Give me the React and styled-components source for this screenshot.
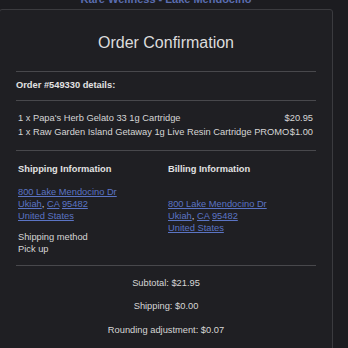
import React from 'react';
import styled, { createGlobalStyle } from 'styled-components';

const GlobalStyle = createGlobalStyle`
  body {
    margin: 0;
    background-color: #1c1c20;
    font-family: "Liberation Sans", Arial, sans-serif;
  }
`

const Page = styled.div`
  width: 348px;
  height: 348px;
  overflow: hidden;
  background-color: #1c1c20;
`
const StoreName = styled.div`
  margin-top: -7px;
  height: 12px;
  line-height: 12px;
  font-size: 11px;
  font-weight: bold;
  text-align: center;
  color: #5a6db0;
  padding-right: 16px;
`
const Card = styled.div`
  margin: 4px 0 0 -1px;
  width: 334px;
  box-sizing: border-box;
  min-height: 400px;
  padding: 0 16px;
  background-color: #1f1f23;
  border: 1px solid #3b3b3f;
  border-radius: 3px;
`
const Title = styled.h1`
  margin: 0;
  padding: 23px 0 18px;
  line-height: 20px;
  font-size: 16px;
  font-weight: normal;
  text-align: center;
  color: #dcdcdc;
`
const Divider = styled.div`
  height: 1px;
  background-color: #48484c;
  margin-top: ${p => p.gap || 0}px;
`
const Heading = styled.div`
  margin-top: ${p => p.gap || 0}px;
  line-height: 14px;
  font-size: 9.3px;
  font-weight: bold;
  color: #e2e2e2;
`
const ItemList = styled.div`
  margin-top: 10px;
  padding: 0 3px 0 2px;
`
const Item = styled.div`
  display: flex;
  justify-content: space-between;
  line-height: 14px;
  font-size: 9.3px;
  color: #d6d6d6;
`
const Columns = styled.div`
  display: grid;
  grid-template-columns: 1fr 1fr;
`
const Column = styled.div`
  padding-left: 2px;
`
const Address = styled.div`
  margin-top: 10px;
  line-height: 12px;
  font-size: 9.3px;
  color: #d6d6d6;
`
const Blank = styled.div`
  height: 12px;
`
const Link = styled.a`
  color: #5b74c4;
  text-decoration: underline;
`
const Method = styled.div`
  margin-top: 9px;
  line-height: 12px;
  font-size: 9.3px;
  color: #d6d6d6;
`
const Totals = styled.div`
  display: flex;
  flex-direction: column;
  gap: 9.3px;
  margin-top: 10px;
`
const TotalRow = styled.div`
  line-height: 14px;
  font-size: 9.3px;
  text-align: center;
  color: #d6d6d6;
`

const items = [
  { name: "1 x Papa's Herb Gelato 33 1g Cartridge", price: '$20.95' },
  { name: '1 x Raw Garden Island Getaway 1g Live Resin Cartridge PROMO', price: '$1.00' },
]

const AddressLines = () => (
  <>
    <div><Link>800 Lake Mendocino Dr</Link></div>
    <div><Link>Ukiah</Link>, <Link>CA</Link> <Link>95482</Link></div>
    <div><Link>United States</Link></div>
  </>
)

export default function App() {
  return (
    <Page>
      <GlobalStyle />
      <StoreName>Rare Wellness - Lake Mendocino</StoreName>
      <Card>
        <Title>Order Confirmation</Title>
        <Divider />
        <Heading gap={6}>Order #549330 details:</Heading>
        <Divider gap={8} />
        <ItemList>
          {items.map(item => (
            <Item key={item.name}>
              <span>{item.name}</span>
              <span>{item.price}</span>
            </Item>
          ))}
        </ItemList>
        <Divider gap={11} />
        <Columns>
          <Column>
            <Heading gap={11}>Shipping Information</Heading>
            <Address>
              <AddressLines />
            </Address>
            <Method>
              <div>Shipping method</div>
              <div>Pick up</div>
            </Method>
          </Column>
          <Column>
            <Heading gap={11}>Billing Information</Heading>
            <Address>
              <Blank />
              <AddressLines />
            </Address>
          </Column>
        </Columns>
        <Divider gap={10} />
        <Totals>
          <TotalRow>Subtotal: $21.95</TotalRow>
          <TotalRow>Shipping: $0.00</TotalRow>
          <TotalRow>Rounding adjustment: $0.07</TotalRow>
        </Totals>
      </Card>
    </Page>
  )
}
